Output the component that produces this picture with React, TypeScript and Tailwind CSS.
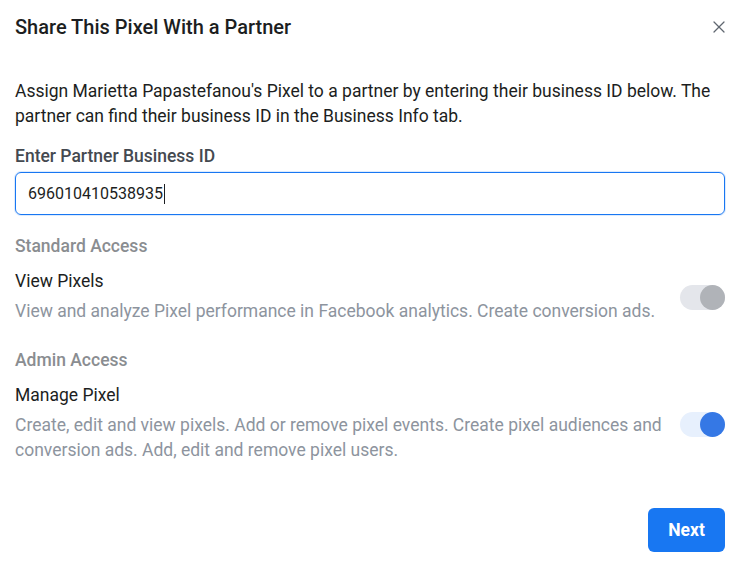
import { X } from "lucide-react"

function Toggle({ on }: { on: boolean }) {
  return (
    <div
      className={
        "relative h-[25px] w-[45px] shrink-0 rounded-full " +
        (on ? "bg-[#e7f0fd]" : "bg-[#e4e6eb]")
      }
    >
      <span
        className={
          "absolute right-0 top-0 h-[25px] w-[25px] rounded-full " +
          (on ? "bg-[#3578e5]" : "bg-[#b0b3b8]")
        }
      />
    </div>
  )
}

function Permission({ title, desc, on }: { title: string; desc: string; on: boolean }) {
  return (
    <div className="flex items-center justify-between gap-4">
      <div className="flex-1">
        <div className="text-[17.5px] leading-[20px] text-[#1c1e21]">{title}</div>
        <p className="mt-[8px] text-[17.5px] leading-[25px] text-[#8d949e]">{desc}</p>
      </div>
      <Toggle on={on} />
    </div>
  )
}

export default function App() {
  return (
    <div
      className="h-[566px] w-[743px] bg-white"
      style={{ fontFamily: "Roboto, 'Liberation Sans', sans-serif" }}
    >
      <div className="flex items-center justify-between pl-[15px] pr-[14px] pt-[15px]">
        <h2 className="text-[20px] font-medium leading-[24px] text-[#1c1e21]">
          Share This Pixel With a Partner
        </h2>
        <X size={20} strokeWidth={1.5} className="text-[#606770]" />
      </div>

      <div className="pl-[15px] pr-[18px] pt-[40px]">
        <p className="text-[17.5px] leading-[25px] text-[#1c1e21]">
          Assign Marietta Papastefanou's Pixel to a partner by entering their business ID below. The
          partner can find their business ID in the Business Info tab.
        </p>

        <div className="mt-[17px] text-[17.5px] font-medium leading-[20px] text-[#444950]">
          Enter Partner Business ID
        </div>
        <div className="mt-[6px] flex h-[43px] items-center rounded-[6px] border border-[#1877f2] px-[12px] shadow-[0_0_0_1px_rgba(24,119,242,0.15)]">
          <span className="text-[16px] text-[#1c1e21]">696010410538935</span>
          <span className="ml-[1px] h-[20px] w-[1px] bg-[#1c1e21]" />
        </div>

        <div className="mt-[21px] text-[17.5px] font-medium leading-[20px] text-[#8a8d91]">
          Standard Access
        </div>
        <div className="mt-[15px]">
          <Permission
            on={false}
            title="View Pixels"
            desc="View and analyze Pixel performance in Facebook analytics. Create conversion ads."
          />
        </div>

        <div className="mt-[26px] text-[17.5px] font-medium leading-[20px] text-[#8a8d91]">
          Admin Access
        </div>
        <div className="mt-[15px]">
          <Permission
            on={true}
            title="Manage Pixel"
            desc="Create, edit and view pixels. Add or remove pixel events. Create pixel audiences and conversion ads. Add, edit and remove pixel users."
          />
        </div>

        <div className="mt-[45px] flex justify-end">
          <button className="h-[44px] w-[77px] rounded-[6px] bg-[#1877f2] text-[17.5px] font-bold text-white">
            Next
          </button>
        </div>
      </div>
    </div>
  )
}
